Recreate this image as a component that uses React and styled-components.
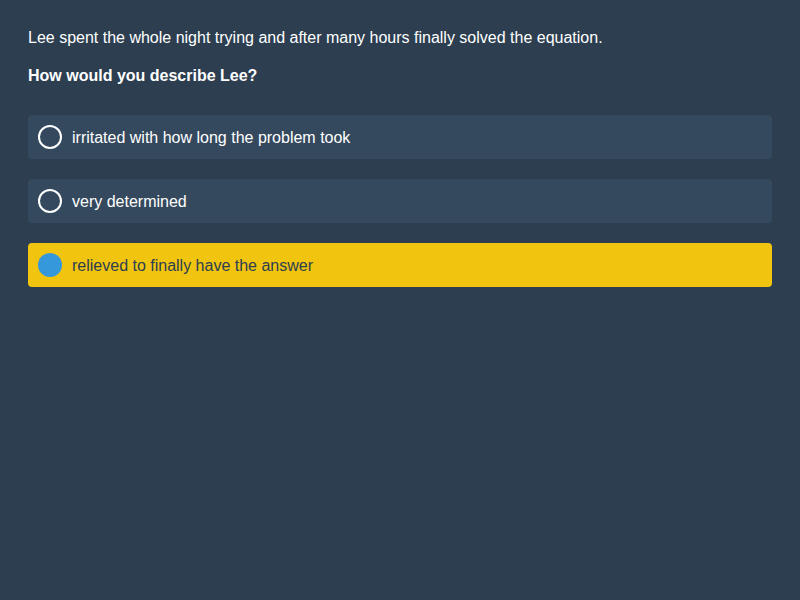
import React, { useState } from 'react'
import styled, { createGlobalStyle } from 'styled-components'

const GlobalStyle = createGlobalStyle`
    html, body {
        margin: 0;
        padding: 0;
        background: #2c3e50;
        font-family: "Liberation Sans", Arial, sans-serif;
    }
`

const Page = styled.div`
    min-height: 600px;
    box-sizing: border-box;
    padding: 28px 28px;
    background: #2c3e50;
    color: #ffffff;
`

const Prompt = styled.p`
    margin: 0 0 18px;
    font-size: 16px;
    line-height: 20px;
`

const Question = styled.p`
    margin: 0 0 29px;
    font-size: 16px;
    line-height: 20px;
    font-weight: bold;
`

const OptionList = styled.div`
    display: flex;
    flex-direction: column;
    gap: 20px;
`

const Option = styled.div`
    display: flex;
    align-items: center;
    gap: 10px;
    height: 44px;
    padding: 0 10px;
    border-radius: 4px;
    background: ${props => props.selected ? '#f1c40f' : '#34495e'};
    color: ${props => props.selected ? '#2c3e50' : '#ffffff'};
    font-size: 16px;
    cursor: pointer;
`

const Radio = styled.span`
    flex: none;
    width: 24px;
    height: 24px;
    box-sizing: border-box;
    border-radius: 50%;
    border: ${props => props.selected ? 'none' : '2px solid #ffffff'};
    background: ${props => props.selected ? '#3498db' : 'transparent'};
`

const Label = styled.span`
    line-height: 20px;
    padding-top: 2px;
`

const options = [
    'irritated with how long the problem took',
    'very determined',
    'relieved to finally have the answer',
]

const App = () => {
    const [selected, setSelected] = useState(2)

    return (
        <Page>
            <GlobalStyle />
            <Prompt>Lee spent the whole night trying and after many hours finally solved the equation.</Prompt>
            <Question>How would you describe Lee?</Question>
            <OptionList>
                {options.map((text, i) => (
                    <Option key={i} selected={i === selected} onClick={() => setSelected(i)}>
                        <Radio selected={i === selected} />
                        <Label>{text}</Label>
                    </Option>
                ))}
            </OptionList>
        </Page>
    )
}

export default App
